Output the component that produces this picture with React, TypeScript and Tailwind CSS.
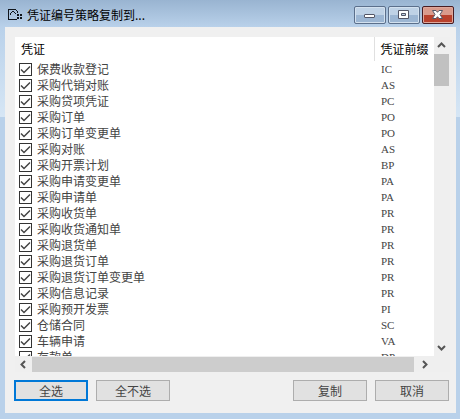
import React from "react";

type Voucher = { name: string; prefix: string };

const vouchers: Voucher[] = [
  { name: "保费收款登记", prefix: "IC" },
  { name: "采购代销对账", prefix: "AS" },
  { name: "采购贷项凭证", prefix: "PC" },
  { name: "采购订单", prefix: "PO" },
  { name: "采购订单变更单", prefix: "PO" },
  { name: "采购对账", prefix: "AS" },
  { name: "采购开票计划", prefix: "BP" },
  { name: "采购申请变更单", prefix: "PA" },
  { name: "采购申请单", prefix: "PA" },
  { name: "采购收货单", prefix: "PR" },
  { name: "采购收货通知单", prefix: "PR" },
  { name: "采购退货单", prefix: "PR" },
  { name: "采购退货订单", prefix: "PR" },
  { name: "采购退货订单变更单", prefix: "PR" },
  { name: "采购信息记录", prefix: "PR" },
  { name: "采购预开发票", prefix: "PI" },
  { name: "仓储合同", prefix: "SC" },
  { name: "车辆申请", prefix: "VA" },
  { name: "存款单", prefix: "DP" },
];

type Direction = "up" | "down" | "left" | "right";

const chevrons: Record<Direction, string> = {
  up: "M1 6 L4.5 2.5 L8 6",
  down: "M1 3 L4.5 6.5 L8 3",
  left: "M6 1 L2.5 4.5 L6 8",
  right: "M3 1 L6.5 4.5 L3 8",
};

function ScrollButton({ direction, label, className }: { direction: Direction; label: string; className: string }) {
  return (
    <button type="button" aria-label={label} className={`flex shrink-0 items-center justify-center ${className}`}>
      <svg width="9" height="9" viewBox="0 0 9 9" fill="none" stroke="#555555" strokeWidth="2">
        <path d={chevrons[direction]} />
      </svg>
    </button>
  );
}

function AppIcon() {
  return (
    <svg width="15" height="15" viewBox="0 0 15 15" className="shrink-0" shapeRendering="crispEdges">
      <path
        d="M0 3h8v1H1v9h8v1H0z M8 4h1v1H8z M9 5h1v2H9z M2 7h1v2H2z M3 6h1v1H3z M4 5h2v1H4z M6 6h1v1H6z M7 7h1v1H7z M9 8h2v2H9z M12 8h2v2h-2z M9 11h2v2H9z M12 11h2v2h-2z"
        fill="#10151c"
      />
    </svg>
  );
}

function TitleBar() {
  return (
    <header className="flex h-[27px] items-center gap-1 bg-linear-to-b from-[#99b4d1] to-[#b9d1ea] pr-[6px] pl-2">
      <AppIcon />
      <h1 className="grow pt-[2px] text-[12px] leading-4 text-black">凭证编号策略复制到...</h1>
      <div className="flex gap-[2px] pt-[3px]">
        <button type="button" aria-label="最小化" className="flex h-[18px] w-8 items-center justify-center rounded-[2px] border border-[#5b6f8b] bg-linear-to-b from-[#bfd2e6] from-50% to-[#9cb6d3] to-50% shadow-[inset_0_0_0_1px_#d3e1ef]">
          <svg width="12" height="12" viewBox="0 0 12 12"><rect x="0.5" y="5.5" width="10" height="3" rx="0.5" fill="#fff" stroke="#535666" /></svg>
        </button>
        <button type="button" aria-label="最大化" className="flex h-[18px] w-8 items-center justify-center rounded-[2px] border border-[#5b6f8b] bg-linear-to-b from-[#bfd2e6] from-50% to-[#9cb6d3] to-50% shadow-[inset_0_0_0_1px_#d3e1ef]">
          <svg width="12" height="12" viewBox="0 0 12 12"><path d="M0.5 1.5h10v8h-10z M3.5 4.500h4v2h-4z" fillRule="evenodd" fill="#fff" stroke="#535666" /></svg>
        </button>
        <button type="button" aria-label="关闭" className="flex h-[18px] w-8 items-center justify-center rounded-[2px] border border-[#481c22] bg-linear-to-b from-[#d99a8c] from-50% to-[#b8402c] to-50% shadow-[inset_0_0_0_1px_#dfa79b]">
          <svg width="12" height="12" viewBox="0 0 12 12"><path d="M0.5 1.5h3.500l1.500 1.800L7 1.500h3.500L8 5.500l2.500 4H7L5.500 7.700L4 9.500H0.500l2.500-4z" fill="#fff" stroke="#535666" /></svg>
        </button>
      </div>
    </header>
  );
}

function VoucherRow({ voucher, id }: { voucher: Voucher; id: string }) {
  return (
    <tr className="h-4">
      <td className="p-0">
        <div className="flex h-4 items-center gap-[5px] pl-1">
          <span className="grid shrink-0">
            <input id={id} type="checkbox" defaultChecked className="peer col-start-1 row-start-1 size-[13px] appearance-none border border-[#333333] bg-white" />
            <svg width="13" height="13" viewBox="0 0 13 13" fill="none" stroke="#444444" strokeWidth="1.5" className="pointer-events-none invisible col-start-1 row-start-1 peer-checked:visible">
              <path d="M2 6.500 L5 9.500 L11 3.500" />
            </svg>
          </span>
          <label htmlFor={id} className="leading-4 whitespace-nowrap">{voucher.name}</label>
        </div>
      </td>
      <td className="p-0 pl-[7px] font-['Liberation_Serif','Noto_Sans_CJK_SC',serif] text-[11px] leading-4">{voucher.prefix}</td>
    </tr>
  );
}

function VoucherList() {
  return (
    <div className="grid grid-cols-[1fr_16px] bg-[#efefef]">
      <div className="h-[319px] overflow-hidden bg-white">
        <table className="w-full table-fixed border-collapse text-left text-[12px] text-[#444444]">
          <colgroup>
            <col />
            <col className="w-[60px]" />
          </colgroup>
          <thead>
            <tr className="h-6 text-black">
              <th className="p-0 pl-[6px] leading-4 font-normal">凭证</th>
              <th className="border-l border-[#e0e0e0] p-0 pl-[6px] leading-4 font-normal whitespace-nowrap">凭证前缀</th>
            </tr>
          </thead>
          <tbody>
            {vouchers.map((voucher, index) => (
              <VoucherRow key={voucher.name} voucher={voucher} id={`voucher-${index}`} />
            ))}
          </tbody>
        </table>
      </div>
      <div className="flex flex-col">
        <ScrollButton direction="up" label="向上滚动" className="h-[17px] w-[15px]" />
        <div className="grow">
          <div className="h-8 w-[15px] bg-[#c1c1c1]" />
        </div>
        <ScrollButton direction="down" label="向下滚动" className="h-[17px] w-[15px]" />
      </div>
      <div className="flex h-4 pt-px">
        <ScrollButton direction="left" label="向左滚动" className="h-[15px] w-[17px]" />
        <div className="grow bg-[#cdcdcd]" />
        <ScrollButton direction="right" label="向右滚动" className="h-[15px] w-5" />
      </div>
    </div>
  );
}

function PushButton({ children, focused = false }: { children: React.ReactNode; focused?: boolean }) {
  return (
    <button
      type="button"
      className={`flex h-[21px] w-[74px] items-center justify-center bg-[#e1e1e1] text-[12px] leading-4 text-[#444444] ${
        focused ? "border-2 border-[#0078d7]" : "border border-[#adadad]"
      }`}
    >
      {children}
    </button>
  );
}

export default function App() {
  return (
    <main className="bg-[#b9d1ea] pb-[6px] font-['Noto_Sans_CJK_SC',sans-serif]">
      <TitleBar />
      <div className="bg-[linear-gradient(to_bottom,#b9d1ea_0,#d6e6f5_90px,#b9d1ea_90px)] pr-1 pl-[5px]">
        <section className="bg-[#f0f0f0] pt-[10px] pb-3">
          <div className="pr-[6px] pl-[10px]">
            <VoucherList />
          </div>
          <div className="mt-2 flex justify-between pr-[7px] pl-[9px]">
            <div className="flex gap-2">
              <PushButton focused>全选</PushButton>
              <PushButton>全不选</PushButton>
            </div>
            <div className="flex gap-2">
              <PushButton>复制</PushButton>
              <PushButton>取消</PushButton>
            </div>
          </div>
        </section>
      </div>
    </main>
  );
}
